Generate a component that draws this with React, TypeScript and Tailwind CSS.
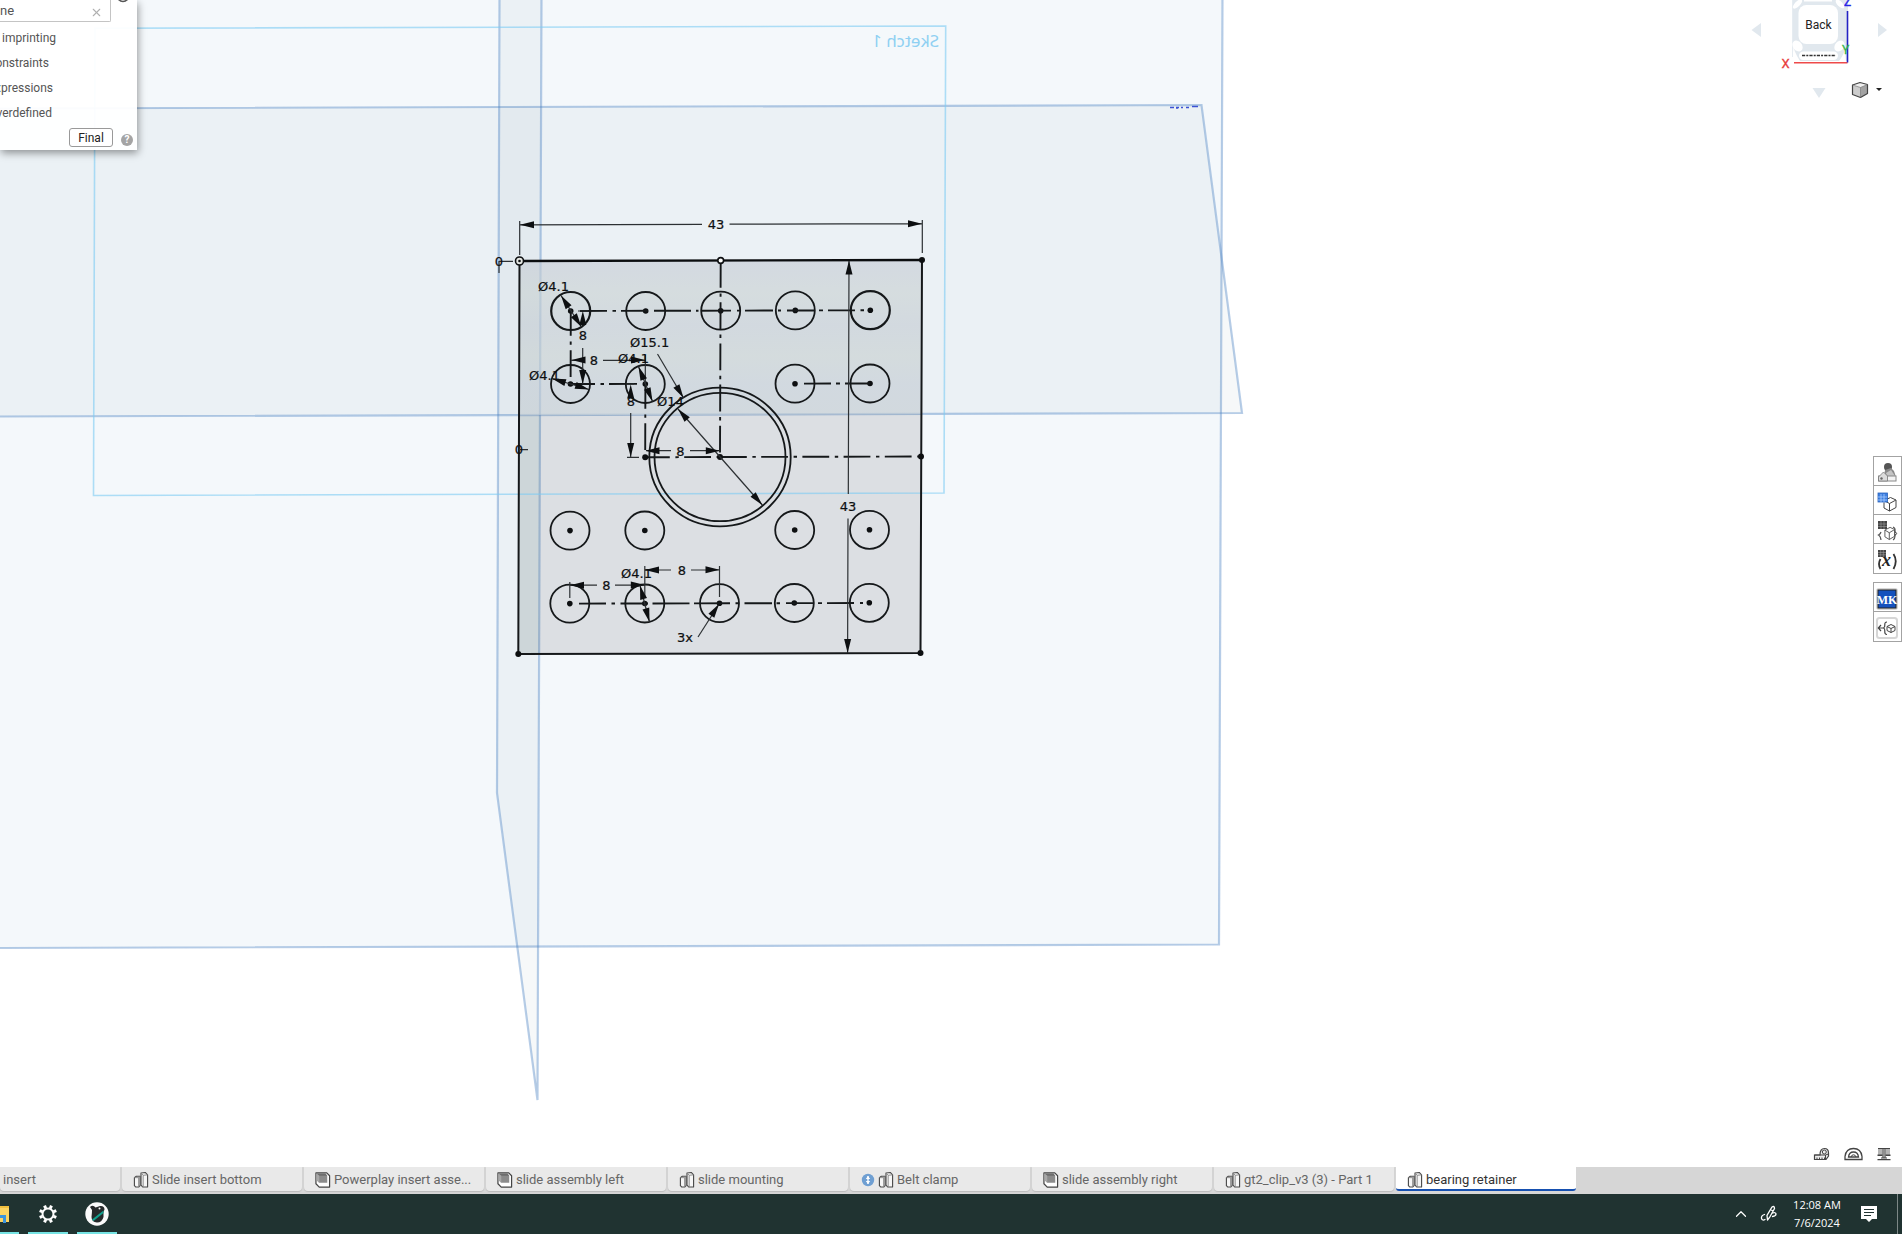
import React from "react";
import { ChevronUp, X } from "lucide-react";

type Seg = [number, number];

const INK = "#15181a";

function Arrow({ x, y, a }: { x: number; y: number; a: number }) {
  return <path d="M0 0L-14 3.5V-3.5Z" fill="#0d0f11" transform={`translate(${x} ${y}) rotate(${a})`} />;
}

function Thin({ d }: { d: string }) {
  return <path d={d} fill="none" stroke="#2c3033" strokeWidth="1.2" />;
}

function Dim({ x, y, children, start = false }: { x: number; y: number; children: string; start?: boolean }) {
  return (
    <text x={x} y={y} textAnchor={start ? "start" : "middle"} fill="#0d0f11" stroke="#0d0f11" strokeWidth="0.2" className="font-['DejaVu_Sans',sans-serif] text-[13px]">
      {children}
    </text>
  );
}

function Dashes({ y1, y2, segs }: { y1: number; y2: number; segs: Seg[] }) {
  const at = (x: number) => y1 + ((x - 570) / 300) * (y2 - y1);
  return (
    <g stroke={INK} strokeWidth="1.9">
      {segs.map(([a, b]) => (
        <line key={a} x1={a} y1={at(a)} x2={b} y2={at(b)} />
      ))}
    </g>
  );
}

const HOLES: [number, number, boolean?][] = [
  [570.7, 311, true], [645.7, 311], [720.7, 310.7], [795.3, 310.4], [870.3, 310.2, true],
  [570.5, 384], [645.3, 384], [795, 383.7], [870, 383.5],
  [570, 530.6], [644.8, 530.5], [794.7, 530], [869.5, 529.8],
  [569.8, 603.6], [644.8, 603.5], [719.5, 603.2], [794.3, 603], [869.3, 602.8],
];

const POINTS: [number, number][] = [
  [922, 260], [920.5, 653], [518.3, 654], [921, 456.5], [645.2, 457.2], [720, 457],
];

const CHAIN = "26.8 5.6 3.4 5.4";

function Planes() {
  return (
    <g stroke="rgb(74 130 195 / 0.4)" strokeWidth="2.2">
      <path d="M-4 -4H1222.5L1219 944.5L-4 948Z" fill="rgb(118 167 205 / 0.08)" />
      <g fill="rgb(88 118 136 / 0.05)">
        <path d="M-4 108.5L1201.5 105L1242 413L-4 416.5Z" />
        <path d="M499.500 -4L497 793L537.500 1100L541.500 -4Z" />
      </g>
    </g>
  );
}

function Sketch() {
  return (
    <>
      <path d="M519.500 261L922 260L920.500 653L518.300 654Z" fill="rgb(8 12 22 / 0.1)" />
      <path d="M519.500 261L922 260L921.400 414L519 415.300Z" fill="url(#sheen)" />
      <path d="M519 416L540 416L539 654L518.300 654Z" fill="rgb(160 200 190 / 0.14)" />
      <path d="M95 28.300L945.700 26L944 493L93.500 495.500Z" fill="none" stroke="#7ccbf3" strokeOpacity="0.6" strokeWidth="1.6" />
      <text transform="translate(939 47) scale(-1 1)" fill="#8fd0f2" className="font-['Noto_Sans',sans-serif] text-[17px]">
        Sketch 1
      </text>
      <path d="M1170 107.500h4m2 0h3m2 0h2m3 0h3M1177 108v1M1192 106.500h6" stroke="#3b51d4" strokeWidth="1.400" fill="none" />

      <path d="M519.500 261L922 260" stroke="#0b0d0f" strokeWidth="2.400" />
      <path d="M922 260L920.500 653L518.300 654L519.500 261" fill="none" stroke={INK} strokeWidth="2" />

      {HOLES.map(([x, y, heavy]) => (
        <g key={`${x}-${y}`}>
          <ellipse cx={x} cy={y} rx="19.5" ry="19" fill="none" stroke={INK} strokeWidth={heavy ? 2.2 : 1.8} />
          <circle cx={x} cy={y} r="2.8" fill="#0d0f11" />
        </g>
      ))}
      <ellipse cx="720" cy="457" rx="70.7" ry="69.3" fill="none" stroke={INK} strokeWidth="1.8" />
      <ellipse cx="720" cy="457" rx="65.5" ry="64.2" fill="none" stroke={INK} strokeWidth="1.8" />

      <Dashes y1={311} y2={310.3} segs={[[580, 607], [612.5, 616], [621, 648], [654, 691], [696, 698.5], [701, 731], [737, 740], [745, 773], [778, 781], [787, 814], [819, 823], [828, 855], [860.5, 864]]} />
      <Dashes y1={384} y2={383.5} segs={[[571, 595], [600.5, 604], [609, 637], [804, 831], [836, 840], [845, 870]]} />
      <Dashes y1={603.6} y2={603} segs={[[579, 606], [611.5, 615], [620.5, 648], [652.5, 689.5], [694, 730], [735.5, 739], [744.5, 772], [776.5, 780], [786, 813], [818, 822], [827, 854], [860, 863]]} />
      <g stroke={INK} strokeWidth="1.9" strokeDasharray={CHAIN}>
        <path d="M720.700 261L720 453" />
        <path d="M720 457L921 456.500" />
        <path d="M645 457.300L720 457" strokeDashoffset="2" />
        <path d="M570.800 309L570.600 384" />
        <path d="M645.400 382L645.200 453" />
      </g>

      {POINTS.map(([x, y]) => (
        <circle key={`${x}-${y}`} cx={x} cy={y} r="3" fill="#0d0f11" />
      ))}
      <circle cx="519.5" cy="261" r="4" fill="#e4e6e2" stroke="#0d0f11" strokeWidth="1.6" />
      <circle cx="519.5" cy="261" r="1.3" fill="#0d0f11" />
      <circle cx="720.7" cy="260.5" r="2.9" fill="#fff" stroke="#0d0f11" strokeWidth="1.6" />

      {/* overall width */}
      <Thin d="M519.700 221V255M922.300 220V253M520 224.800L702 224.300M729.500 224.200L922 223.700" />
      <Arrow x={520} y={224.8} a={180} />
      <Arrow x={922} y={223.7} a={0} />
      <Dim x={716} y={229}>43</Dim>

      {/* overall height */}
      <Thin d="M849 261L848.300 494M848 518.500L847.600 653" />
      <Arrow x={849} y={260.5} a={-90} />
      <Arrow x={847.6} y={653} a={90} />
      <Dim x={848} y={511}>43</Dim>

      {/* zero offsets */}
      <Thin d="M499 261.300H513M499 261V273M519 449.700H528" />
      <Dim x={499} y={266}>0</Dim>
      <Dim x={519} y={454}>0</Dim>

      {/* upper-left hole pattern */}
      <Thin d="M578 311H588M582.700 348V384M571 360.300H584M603 360.300H645M645.300 355V384" />
      <Arrow x={582.8} y={311} a={-90} />
      <Arrow x={582.7} y={384} a={90} />
      <Dim x={583} y={340}>8</Dim>
      <Arrow x={571.5} y={360} a={180} />
      <Arrow x={645} y={360} a={0} />
      <Dim x={594} y={365}>8</Dim>

      <Dim x={538} y={291} start>Ø4.1</Dim>
      <Thin d="M561 295.500L581.500 327" />
      <Arrow x={561} y={295.500} a={-123} />
      <Arrow x={581.5} y={327} a={57} />
      <Dim x={529} y={380} start>Ø4.1</Dim>
      <Thin d="M552 378.500L589 389.500" />
      <Arrow x={552} y={378.5} a={197} />
      <Arrow x={589} y={389.5} a={17} />
      <Dim x={618} y={363} start>Ø4.1</Dim>
      <Thin d="M638.500 366.500L652.500 401.500" />
      <Arrow x={638.5} y={366.5} a={-112} />
      <Arrow x={652.5} y={401.5} a={68} />

      {/* bore diameters */}
      <Dim x={630} y={347} start>Ø15.1</Dim>
      <Thin d="M657.500 354L683.500 398" />
      <Arrow x={683.5} y={398} a={59.5} />
      <Dim x={657} y={406} start>Ø14</Dim>
      <Thin d="M678 409L762.300 505" />
      <Arrow x={678} y={409} a={-131} />
      <Arrow x={762.3} y={505} a={49} />

      <Thin d="M630.700 413V457M627 457.300H639M626 384H634M646 450.700H671M690 450.700H720" />
      <Arrow x={630.7} y={384.500} a={-90} />
      <Arrow x={630.7} y={457} a={90} />
      <Dim x={631} y={406}>8</Dim>
      <Arrow x={645.5} y={450.7} a={180} />
      <Arrow x={719.8} y={450.7} a={0} />
      <Dim x={680.5} y={456}>8</Dim>

      {/* bottom row */}
      <Thin d="M569.800 582V598M570 585.200H597M615 585.200H645M644.800 566V598M645 570H671M691 570H719.500M719.500 566V597" />
      <Arrow x={570} y={585.2} a={180} />
      <Arrow x={644.8} y={585} a={0} />
      <Dim x={606.5} y={590}>8</Dim>
      <Arrow x={645} y={570} a={180} />
      <Arrow x={719.5} y={569.8} a={0} />
      <Dim x={682} y={575}>8</Dim>
      <Dim x={621} y={578} start>Ø4.1</Dim>
      <Thin d="M640 585.500L649.500 622" />
      <Arrow x={640} y={585.5} a={-105} />
      <Arrow x={649.5} y={622} a={75} />
      <Thin d="M698 637L718.500 605" />
      <Arrow x={719} y={604} a={-57} />
      <Dim x={677} y={642} start>3x</Dim>
    </>
  );
}

function Viewport() {
  return (
    <svg className="absolute inset-0 h-full w-full" aria-label="Sketch canvas">
      <defs>
        <linearGradient id="sheen" x1="0" y1="0" x2="0" y2="1">
          <stop offset="0" stopColor="#d3d9e3" stopOpacity="0.6" />
          <stop offset="0.22" stopColor="#d6dfdf" stopOpacity="0.6" />
          <stop offset="0.42" stopColor="#d1d9e0" stopOpacity="0.6" />
          <stop offset="0.62" stopColor="#d4dddd" stopOpacity="0.6" />
          <stop offset="0.8" stopColor="#d0d9e1" stopOpacity="0.6" />
          <stop offset="1" stopColor="#d0d9de" stopOpacity="0.6" />
        </linearGradient>
      </defs>
      <Planes />
      <Sketch />
    </svg>
  );
}

function SketchDialog() {
  const options = [
    { text: "imprinting", cls: "w-[56px]" },
    { text: "onstraints", cls: "w-[49px]" },
    { text: "xpressions", cls: "w-[53px]" },
    { text: "verdefined", cls: "w-[52px]" },
  ];
  return (
    <section className="absolute left-0 top-0 flex h-[150px] w-[137px] flex-col bg-white/95 text-[12px] text-[#555] shadow-[1px_3px_8px_rgba(0,0,0,0.4)]">
      <div className="flex h-[22px] items-start justify-between pr-[7px]">
        <div className="flex h-[22px] w-[111px] items-center rounded-br-[2px] border-b border-r border-[#c4c4c4]">
          <input aria-label="Sketch plane" defaultValue="ne" className="w-[90px] bg-transparent text-[13px] outline-none" />
          <button aria-label="Clear">
            <X size={13} strokeWidth={2} className="mt-1 text-[#b0b0b0]" />
          </button>
        </div>
        <svg width="14" height="4" viewBox="0 0 14 4" fill="none" stroke="#555" strokeWidth="1.5">
          <path d="M2 -1Q7 4 12 -1" />
        </svg>
      </div>
      <div className="mt-[3px] flex flex-col">
        {options.map((o) => (
          <div key={o.text} className={`${o.cls} flex h-[25px] items-center justify-end whitespace-nowrap`}>
            {o.text}
          </div>
        ))}
      </div>
      <div className="mt-[3px] flex items-center gap-2 pl-[69px]">
        <button className="h-[19px] w-[44px] rounded-[3px] border border-[#999] bg-white text-[12px] leading-none text-[#222]">Final</button>
        <button aria-label="Help" className="mt-[5px] flex h-[12px] w-[12px] items-center justify-center rounded-full bg-[#a4a4a4] text-[10px] font-bold leading-none text-white">
          ?
        </button>
      </div>
    </section>
  );
}

function ViewCube() {
  return (
    <svg className="absolute right-0 top-0 h-[110px] w-[182px]" viewBox="0 0 182 110" aria-label="View cube">
      <g fill="#e1e8ee">
        <path d="M31.500 30L41 23V37Z" />
        <path d="M167 30L158 23V37Z" />
        <path d="M99 98L92.500 88H105.500Z" />
        <path d="M73 0H128V61H80Q73 50 73 44Z" />
      </g>
      <path d="M72.700 0V57" stroke="#e1e8ee" />
      <g fill="#fff">
        <rect x="78.500" y="5" width="39.500" height="39" rx="8" />
        <ellipse cx="77.500" cy="4" rx="6" ry="2.600" transform="rotate(-45 77.500 4)" />
        <ellipse cx="120" cy="4" rx="5.500" ry="2.600" transform="rotate(45 120 4)" />
        <ellipse cx="77.500" cy="46" rx="4.500" ry="6" transform="rotate(-40 77.500 46)" />
        <ellipse cx="119.500" cy="46" rx="4.500" ry="6" transform="rotate(40 119.500 46)" />
        <rect x="79" y="51.500" width="39" height="8.500" rx="4.200" />
        <path d="M73 50Q77 58 80 62H73ZM125 50Q122 58 118 62H126Z" />
        <path d="M84 0H112V1.500H84Z" />
      </g>
      <path d="M82 55.500H116" stroke="#333" strokeWidth="1.600" strokeDasharray="3.200 1.100 2 1.100" fill="none" />
      <path d="M74 62.700H127.500" stroke="#ee4a4a" strokeWidth="1.600" />
      <path d="M127.500 11V62.500" stroke="#2323c4" strokeWidth="1.600" />
      <text x="98.500" y="29" textAnchor="middle" fill="#222" className="font-[Roboto,sans-serif] text-[12px]">Back</text>
      <text x="65.500" y="68" textAnchor="middle" fill="#e83b3b" stroke="#e83b3b" strokeWidth="0.3" className="font-[Roboto,sans-serif] text-[13px]">X</text>
      <text x="125.500" y="54" textAnchor="middle" fill="#2fb44a" stroke="#2fb44a" strokeWidth="0.3" className="font-[Roboto,sans-serif] text-[12px]">Y</text>
      <text x="127.500" y="6" textAnchor="middle" fill="#2626e6" stroke="#2626e6" strokeWidth="0.3" className="font-[Roboto,sans-serif] text-[12px]">Z</text>
      <g strokeLinejoin="round">
        <path d="M132.500 85L140.500 87.500V97.500L132.500 94.500Z" fill="#cdcdcd" />
        <path d="M132.500 85L140.500 87.500L147.500 84.500L140 82.500Z" fill="#efefef" />
        <path d="M140.500 87.500V97.500L147.500 93.500V84.500Z" fill="#a3a3a3" />
        <path d="M132.500 85L140 82.500L147.500 84.500V93.500L140.500 97.500L132.500 94.500Z" fill="none" stroke="#444" strokeWidth="1.200" />
        <path d="M132.500 85L140.500 87.500L147.500 84.500M140.500 87.500V97.500" fill="none" stroke="#777" strokeWidth=".7" />
      </g>
      <path d="M156 88H162L159 91Z" fill="#222" />
    </svg>
  );
}

const GRID = "M5 3V12M8 3V12M2 6H11M2 9H11";

function ToolIcon({ kind }: { kind: string }) {
  const cube = (
    <g fill="#fff" stroke="#444" strokeWidth="1" strokeLinejoin="round">
      <path d="M8 9.500L14.500 6.500L20 9V16.500L13.500 20L8 17Z" />
      <path d="M8 9.500L13.500 12.500L20 9M13.500 12.500V20" />
    </g>
  );
  return (
    <svg width="23" height="22" viewBox="0 0 23 22" fill="none">
      {kind === "appearance" && (
        <>
          <circle cx="12" cy="5" r="4" fill="#555" />
          <path d="M9 8L15 6L18 9L20 15H8Z" fill="#8a8a8a" />
          <path d="M10 11L15 8L19 14H11Z" fill="#c4c4c4" />
          <rect x="2.500" y="14" width="17.500" height="5" fill="#f3f3f3" stroke="#888" />
          <path d="M2.500 15L7.500 10L11.500 14V19H2.500Z" fill="#dcdcdc" stroke="#777" strokeWidth=".8" />
          <circle cx="5.500" cy="16.500" r="1.200" fill="#666" />
        </>
      )}
      {kind === "parts" && (
        <>
          {cube}
          <rect x="2" y="2" width="9.500" height="9" fill="#3d7fe0" stroke="#2b64bd" strokeWidth=".8" />
          <path d={GRID} stroke="#a9cbff" strokeWidth=".8" />
        </>
      )}
      {kind === "configure" && (
        <>
          <g transform="translate(2.500 1.500) scale(.8 .9)">{cube}</g>
          <path d="M5 12Q4.500 14 2.500 15Q4.500 16 5 20M17 7Q19.500 8 19 11Q19 13 21 13.500Q19 14 19 16Q19 19 17 20" stroke="#555" strokeWidth="1.200" />
          <rect x="2" y="1" width="9" height="8" fill="#444" />
          <path d="M5 1V9M8 1V9M2 4H11M2 6.500H11" stroke="#aaa" strokeWidth=".5" />
        </>
      )}
      {kind === "variables" && (
        <>
          <text x="6" y="17" fill="#222" className="font-['Liberation_Serif',serif] text-[18px] font-bold italic">x</text>
          <path d="M4.500 10Q1.500 15 4.500 20M17.500 5Q22 12 17.500 20" stroke="#333" strokeWidth="1.800" />
          <rect x="2" y="1" width="8" height="7" fill="#444" />
          <path d="M4.700 1V8M7.300 1V8M2 3.500H10M2 5.800H10" stroke="#aaa" strokeWidth=".5" />
        </>
      )}
      {kind === "mk" && (
        <>
          <rect x="0" y="0" width="22" height="22" rx="3" fill="#d6d6d6" />
          <rect x="2" y="2" width="18" height="18" fill="#1551bd" stroke="#222" />
          <text x="11" y="16" textAnchor="middle" fill="#fff" className="font-['Liberation_Serif',serif] text-[12px] font-bold">MK</text>
        </>
      )}
      {kind === "derive" && (
        <>
          <rect x="1" y="1" width="20" height="20" rx="2.500" fill="#fff" stroke="#d6d6d6" strokeWidth="2" />
          <path d="M8 11H2.500M5 8L2.300 11L5 14M11 5Q8.500 5 8.800 8Q9 10.500 7.500 11Q9 11.500 8.800 14Q8.500 17.500 11 17.500" stroke="#444" strokeWidth="1.200" />
          <path d="M11 9.500L15 7.500L19 9.500V13.500L15 15.500L11 13.500ZM11 9.500L15 11.500L19 9.500M15 11.500V15.500" stroke="#444" />
        </>
      )}
    </svg>
  );
}

function SideTools() {
  const groups = [["appearance", "parts", "configure", "variables"], ["mk", "derive"]];
  return (
    <aside className="absolute right-0 top-[456px] flex flex-col gap-2">
      {groups.map((g) => (
        <div key={g[0]} className="w-[29px] divide-y divide-[#a3a3a3] border border-[#a3a3a3] bg-white">
          {g.map((k) => (
            <button key={k} aria-label={k} className="flex h-[29px] w-full items-center justify-center pt-[3px]">
              <ToolIcon kind={k} />
            </button>
          ))}
        </div>
      ))}
    </aside>
  );
}

function MeasureTools() {
  return (
    <div className="absolute bottom-[6px] right-[11px] flex items-center gap-[14px]">
      <button aria-label="Measure">
        <svg width="17" height="14" viewBox="0 0 17 14" fill="none" stroke="#444">
          <path d="M1.500 8H7Q7 1.500 11.500 1.500Q15.500 1.500 15.500 6V9L13 12.500H1.500Z" fill="#ececec" strokeWidth="1.200" />
          <circle cx="11.300" cy="5" r="2" />
          <path d="M4 10.500V12M6.500 10.500V12M9 10.500V12M11.500 10.500V12M1.500 8H12.500L15.500 7M12.500 8V12.500" />
        </svg>
      </button>
      <button aria-label="Protractor">
        <svg width="19" height="14" viewBox="0 0 19 14" fill="none" stroke="#444" strokeWidth="1.300">
          <path d="M1 12.500V9.500Q2 1.500 9.500 1.500Q17 1.500 18 9.500V12.500Z" />
          <path d="M4.500 10Q5 5 9.500 5Q14 5 14.500 10Z" />
          <path d="M7 10Q7.500 7.800 9.500 7.800Q11.500 7.800 12 10" strokeWidth="1" />
        </svg>
      </button>
      <button aria-label="Mass properties">
        <svg width="14" height="14" viewBox="0 0 14 14" fill="none" stroke="#444" strokeWidth="1.200">
          <path d="M1 1.500H13M6 1V11M8 1V11M.500 12.700H13.500M4 11H10" />
          <path d="M2 2V8M4 2V8M10 2V8M12 2V8" strokeWidth=".8" />
          <path d="M.500 7.500H5.500V9H.500ZM8.500 7.500H13.500V9H8.500Z" fill="#444" stroke="none" />
        </svg>
      </button>
    </div>
  );
}

function PartIcon() {
  return (
    <svg width="16" height="18" viewBox="0 0 17 18" fill="#f6f6f6" stroke="#4a4a4a" strokeWidth="1.200" strokeLinejoin="round">
      <path d="M1.500 6.500L3.500 5H7.500V15L6 16.500H3L1.500 15Z" />
      <path d="M1.500 6.500H6L7.500 5M6 6.500V16.500" fill="none" stroke="#888" strokeWidth="1" />
      <path d="M8.500 1.500L13 1L15.500 3.500V16.500H10.500L8.500 14.500Z" />
      <path d="M8.500 1.500L10.800 4L15.500 3.500M10.800 4V16.500" fill="none" stroke="#888" strokeWidth="1" />
    </svg>
  );
}

function AssemblyIcon() {
  return (
    <svg width="16" height="18" viewBox="0 0 17 18" fill="none" strokeLinejoin="round">
      <path d="M1 1.500H12.500L15.500 4.500V16.500H4.500L1 13Z" fill="#fff" stroke="#444" strokeWidth="1.300" />
      <path d="M1.500 2H11L13 4.500V12H4.500L1.500 9Z" fill="#8b8b8b" />
      <path d="M1.500 2H11L13 4.500H4.500Z" fill="#6d6d6d" />
      <path d="M1.500 2V9L4.500 12V4.500Z" fill="#a8a8a8" />
    </svg>
  );
}

const TABS = [
  { label: "Slide insert bottom", kind: "part" },
  { label: "Powerplay insert asse...", kind: "assembly" },
  { label: "slide assembly left", kind: "assembly" },
  { label: "slide mounting", kind: "part" },
  { label: "Belt clamp", kind: "part", linked: true },
  { label: "slide assembly right", kind: "assembly" },
  { label: "gt2_clip_v3 (3) - Part 1", kind: "part" },
  { label: "bearing retainer", kind: "part", active: true },
];

function TabBar() {
  return (
    <nav className="flex h-[27px] shrink-0 gap-[2px] overflow-hidden bg-[#d6d6d6] text-[13px] text-[#666]">
      <button className="flex h-[24px] w-[120px] shrink-0 items-center rounded-b-[4px] bg-[#e9e9e9] pl-[3px] pt-[2px] shadow-[0_1px_1px_#bbb]">insert</button>
      {TABS.map((t) => (
        <button
          key={t.label}
          className={
            t.active
              ? "flex h-[24px] w-[180px] shrink-0 items-center gap-[3px] whitespace-nowrap rounded-b-[3px] border-b-2 border-[#1650b0] bg-white pl-[11px] pt-[4px] text-[#333]"
              : "flex h-[24px] w-[180px] shrink-0 items-center gap-[3px] whitespace-nowrap rounded-b-[4px] bg-[#e9e9e9] pl-[11px] pt-[2px] shadow-[0_1px_1px_#bbb]"
          }
        >
          {t.linked && (
            <svg width="14" height="14" viewBox="0 0 14 14">
              <circle cx="7" cy="7" r="6.200" fill="#6f9fd2" />
              <path d="M7 3V11" stroke="#fff" strokeWidth="1.400" fill="none" />
              <path d="M4.800 6L7 3L9.200 6ZM4.800 8L7 11L9.200 8Z" fill="#fff" />
            </svg>
          )}
          {t.kind === "part" ? <PartIcon /> : <AssemblyIcon />}
          <span>{t.label}</span>
        </button>
      ))}
    </nav>
  );
}

function Taskbar() {
  const cell = "flex h-full w-[40px] items-center justify-center border-b-2 border-[#76e3e3]";
  return (
    <footer className="flex h-[40px] shrink-0 items-center justify-between bg-[#203331] text-white">
      <div className="flex h-full gap-[9px]">
        <button aria-label="File Explorer" className="flex h-full w-[19px] items-center border-b-2 border-[#76e3e3]">
          <svg width="10" height="17" viewBox="0 0 10 17" className="mt-[2px]">
            <path d="M0 0H9V16H0Z" fill="#fcd462" />
            <path d="M0 0H9V2H0Z" fill="#f0bf3e" />
            <path d="M0 9H6V17H3V12H0Z" fill="#3b94dd" />
          </svg>
        </button>
        <button aria-label="Settings" className={cell}>
          <svg width="20" height="20" viewBox="0 0 20 20" className="mt-[2px]">
            <g transform="translate(10 10)" stroke="#fff" fill="none">
              <circle r="5.500" strokeWidth="2" />
              {[22.5, 67.5, 112.5, 157.5, 202.5, 247.5, 292.5, 337.5].map((a) => (
                <path key={a} d="M0 -6V-9" strokeWidth="3" transform={`rotate(${a})`} />
              ))}
            </g>
          </svg>
        </button>
        <button aria-label="Slicer" className={cell}>
          <svg width="24" height="24" viewBox="0 0 24 24" className="mt-[2px]">
            <circle cx="12" cy="12" r="11.700" fill="#fafafa" />
            <path d="M5 5Q8 2.500 10.500 5.500L15 4Q19.500 3.500 19.500 7.500L18.500 10V15Q17 20.500 12 20.500Q6.500 20 6.500 15Q7 11 7 8Z" fill="#25292a" />
            <path d="M7 17.500L18.500 8.500V11L8.500 19Z" fill="#12a08d" />
            <circle cx="14.500" cy="6.500" r="1" fill="#fff" />
          </svg>
        </button>
      </div>
      <div className="flex h-full items-center">
        <button aria-label="Show hidden icons">
          <ChevronUp size={18} strokeWidth={1.6} />
        </button>
        <button aria-label="Pen menu" className="ml-[10px]">
          <svg width="18" height="18" viewBox="0 0 18 18" fill="none" stroke="#fff" strokeWidth="1.300" strokeLinecap="round">
            <path d="M7.500 15L7 10.500L12 2Q14.500 .5 14.500 3.500L9.500 12.500L7.500 15M10.500 4.500L13 6" />
            <path d="M4.500 9.500Q1 10.500 1.500 13.500Q2.500 16 5 14.500M12.500 8Q15.500 7 16 9Q16 11 12.500 11.500" />
          </svg>
        </button>
        <button className="ml-[14px] flex w-[50px] flex-col items-center whitespace-nowrap font-['Open_Sans',sans-serif] text-[11px] leading-[18px]">
          <span>12:08 AM</span>
          <span>7/6/2024</span>
        </button>
        <button aria-label="Notifications" className="ml-[19px] mr-[20px]">
          <svg width="16" height="16" viewBox="0 0 16 16">
            <path d="M0 0H16V13H11L8 16L5 13H0Z" fill="#fff" />
            <path d="M3 3.500H13M3 6.500H13M3 9.500H10" stroke="#203331" strokeWidth="1.200" />
          </svg>
        </button>
        <div className="mr-[4px] h-full w-px bg-[#7d8887]" />
      </div>
    </footer>
  );
}

export default function App() {
  return (
    <div className="flex h-screen flex-col overflow-hidden bg-white font-[Roboto,sans-serif]">
      <main className="relative min-h-0 flex-1 overflow-hidden">
        <Viewport />
        <SketchDialog />
        <ViewCube />
        <SideTools />
        <MeasureTools />
      </main>
      <TabBar />
      <Taskbar />
    </div>
  );
}
